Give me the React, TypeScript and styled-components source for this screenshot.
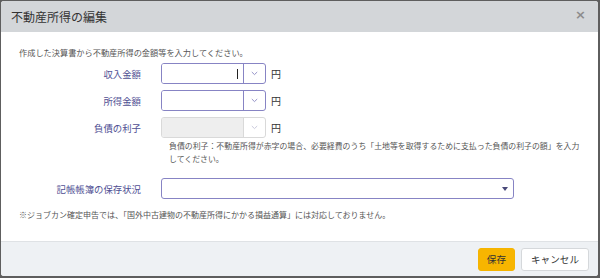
import React from "react";
import styled, { createGlobalStyle } from "styled-components";

const Global = createGlobalStyle`
  html, body { margin: 0; padding: 0; }
  body {
    background: #5e5e5e;
    font-family: "Noto Sans CJK JP", "Noto Sans", sans-serif;
    color: #333;
  }
`;

const Modal = styled.div`
  margin: 1px 2px 2px 1px;
  width: 597px;
  height: 275px;
  background: #fff;
  border-radius: 3px;
  overflow: hidden;
  display: flex;
  flex-direction: column;
`;

const Header = styled.div`
  height: 31px;
  flex: none;
  background: #d3d6d9;
  display: flex;
  align-items: center;
  justify-content: space-between;
  padding: 0 10px 0 10px;
`;

const Title = styled.h1`
  margin: 0;
  font-size: 12px;
  font-weight: 400;
  color: #333;
  letter-spacing: 0;
`;

const Close = styled.span`
  font-size: 13px;
  color: #8c8c8c;
  font-weight: 700;
  margin-right: 2px;
  margin-top: -4px;
  font-family: "DejaVu Sans", sans-serif;
`;

const Body = styled.div`
  flex: 1;
  padding: 14px 18px 0 18px;
`;

const SmallText = styled.p<{ $indent?: number; $top?: number; $lh?: number; $size?: number }>`
  margin: ${(p) => p.$top ?? 0}px 0 0 ${(p) => p.$indent ?? 0}px;
  font-size: ${(p) => p.$size ?? 8.2}px;
  line-height: ${(p) => p.$lh ?? 12}px;
  color: #555;
  white-space: nowrap;
`;

const Form = styled.div<{ $top: number }>`
  display: flex;
  flex-direction: column;
  gap: 6px;
  margin-top: ${(p) => p.$top}px;
`;

const Row = styled.div`
  display: grid;
  grid-template-columns: 122px auto;
  column-gap: 20px;
  align-items: center;
  height: 21px;
`;

const Label = styled.label`
  text-align: right;
  font-size: 9.4px;
  color: #4f4f93;
`;

const Field = styled.div`
  display: flex;
  align-items: center;
  gap: 5px;
`;

const Combo = styled.div<{ $disabled?: boolean }>`
  position: relative;
  display: flex;
  width: 105px;
  height: 21px;
  box-sizing: border-box;
  border: 1px solid ${(p) => (p.$disabled ? "#d9d9d9" : "#8784c4")};
  border-radius: 3px;
  overflow: hidden;
  background: #fff;
`;

const ComboInput = styled.div<{ $disabled?: boolean }>`
  flex: 1;
  background: ${(p) => (p.$disabled ? "#eeeeee" : "#fff")};
  border-right: 1px solid ${(p) => (p.$disabled ? "#d9d9d9" : "#8784c4")};
`;

const ComboButton = styled.div`
  width: 21px;
  display: flex;
  align-items: center;
  justify-content: center;
`;

const Caret = styled.span`
  position: absolute;
  left: 75px;
  top: 5px;
  width: 1px;
  height: 10px;
  background: #222;
`;

const Yen = styled.span`
  font-size: 10px;
  color: #333;
`;

const Select = styled.div`
  width: 353px;
  height: 21px;
  box-sizing: border-box;
  border: 1px solid #8784c4;
  border-radius: 3px;
  display: flex;
  align-items: center;
  justify-content: flex-end;
  padding-right: 5px;
  background: #fff;
`;

const Footer = styled.div`
  flex: none;
  height: 34px;
  border-top: 1px solid #dfe2e5;
  background: #eef1f4;
  display: flex;
  align-items: center;
  justify-content: flex-end;
  gap: 6px;
  padding-right: 9px;
`;

const Button = styled.button<{ $primary?: boolean }>`
  height: 23px;
  box-sizing: border-box;
  padding: 0 ${(p) => (p.$primary ? 8 : 9)}px;
  font-family: inherit;
  font-size: 9.6px;
  color: #333;
  border-radius: 3px;
  border: 1px solid ${(p) => (p.$primary ? "#f5b400" : "#d5d8db")};
  background: ${(p) => (p.$primary ? "#f7b500" : "#fff")};
  cursor: pointer;
`;

const Chevron = ({ color }: { color: string }) => (
  <svg width="7" height="5" viewBox="0 0 7 5">
    <path d="M0.8 1 L3.5 3.6 L6.2 1" fill="none" stroke={color} strokeWidth="0.9" />
  </svg>
);

const Triangle = () => (
  <svg width="6" height="4" viewBox="0 0 6 4">
    <path d="M0 0 H6 L3 4 Z" fill="#4a4a7a" />
  </svg>
);

const AmountRow = ({
  label,
  disabled,
  focused,
}: {
  label: string;
  disabled?: boolean;
  focused?: boolean;
}) => (
  <Row>
    <Label>{label}</Label>
    <Field>
      <Combo $disabled={disabled}>
        <ComboInput $disabled={disabled} />
        <ComboButton>
          <Chevron color={disabled ? "#c4c4d8" : "#8a88c2"} />
        </ComboButton>
        {focused && <Caret />}
      </Combo>
      <Yen>円</Yen>
    </Field>
  </Row>
);

export default function App() {
  return (
    <>
      <Global />
      <Modal>
        <Header>
          <Title>不動産所得の編集</Title>
          <Close>×</Close>
        </Header>
        <Body>
          <SmallText>作成した決算書から不動産所得の金額等を入力してください。</SmallText>
          <Form $top={5}>
            <AmountRow label="収入金額" focused />
            <AmountRow label="所得金額" />
            <AmountRow label="負債の利子" disabled />
          </Form>
          <SmallText $indent={150} $top={1} $lh={13} $size={7.9}>
            負債の利子：不動産所得が赤字の場合、必要経費のうち「土地等を取得するために支払った負債の利子の額」を入力
            <br />
            してください。
          </SmallText>
          <Form $top={13}>
            <Row>
              <Label>記帳帳簿の保存状況</Label>
              <Select>
                <Triangle />
              </Select>
            </Row>
          </Form>
          <SmallText $top={10} $size={8}>
            ※ジョブカン確定申告では、「国外中古建物の不動産所得にかかる損益通算」には対応しておりません。
          </SmallText>
        </Body>
        <Footer>
          <Button $primary>保存</Button>
          <Button>キャンセル</Button>
        </Footer>
      </Modal>
    </>
  );
}
